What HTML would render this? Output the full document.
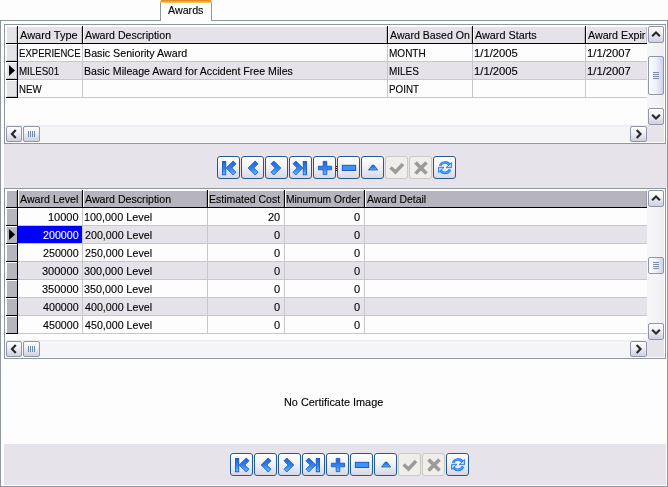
<!DOCTYPE html><html><head><meta charset="utf-8"><style>
*{margin:0;padding:0}
html,body{width:668px;height:487px;overflow:hidden;background:#fcfdfc;position:relative}
body>div,body>svg{position:absolute}
.t{position:absolute;font-family:"Liberation Sans",sans-serif;font-size:11px;line-height:18px;color:#000;white-space:nowrap;filter:grayscale(1);-webkit-text-stroke:0.12px currentColor}
.sb{position:absolute;border:1px solid #8e96a8;border-radius:2px;background:linear-gradient(180deg,#ffffff 0%,#eeeef5 45%,#cfd0e0 100%);overflow:hidden}
.sb.tv{background:linear-gradient(90deg,#fdfdff 0%,#eef0f8 50%,#cdd2ea 100%)}
.grip{position:absolute;left:4px;top:50%;margin-top:-4px;width:6px;height:7px;background:repeating-linear-gradient(180deg,#7e8aa6 0,#7e8aa6 1px,transparent 1px,transparent 2px)}
.gripv{position:absolute;left:4px;top:4px;width:7px;height:6px;background:repeating-linear-gradient(90deg,#6f8aa8 0,#6f8aa8 1px,transparent 1px,transparent 2px)}
.nb{position:absolute;width:21px;height:21px;border:1px solid #255a8e;border-radius:3px;background:linear-gradient(180deg,#ffffff 0%,#f4f4f8 40%,#d8d8e6 100%)}
.nb.dis{border-color:#cbc7c2;background:#f0eeea}
</style></head><body><div style="left:0px;top:20px;width:668px;height:467px;background:#fcfdfc;"></div><div style="left:0px;top:20px;width:1px;height:467px;background:#8f979c;"></div><div style="left:667px;top:20px;width:1px;height:467px;background:#8f979c;"></div><div style="left:0px;top:20px;width:668px;height:1px;background:#8f979c;"></div><div style="left:0px;top:486px;width:668px;height:1px;background:#8f979c;"></div><div style="left:160px;top:0px;width:52px;height:21px;background:#fcfdfc;"></div><div style="left:160px;top:3px;width:1px;height:18px;background:#8f979c;"></div><div style="left:211px;top:3px;width:1px;height:18px;background:#8f979c;"></div><div style="left:161px;top:0px;width:50px;height:1px;background:#e68a2e;"></div><div style="left:160px;top:1px;width:52px;height:1px;background:#f3a33a;"></div><div style="left:160px;top:2px;width:52px;height:1px;background:#fbc54a;"></div><div class="t" style="left:168.00px;top:1px;color:#000;transform:scaleX(0.9722);transform-origin:0 0;">Awards</div><div style="left:4px;top:144px;width:663px;height:44px;background:#e6e3ea;"></div><div style="left:4px;top:444px;width:662px;height:41px;background:#e6e3ea;"></div><div style="left:4px;top:24px;width:662px;height:120px;background:#8f979c;"></div><div style="left:5px;top:25px;width:660px;height:118px;background:#fcfdfc;"></div><div style="left:7px;top:27px;width:640px;height:16px;background:#e5e2e9;"></div><div style="left:6px;top:43px;width:641px;height:1px;background:#000;"></div><div style="left:17px;top:26px;width:1px;height:72px;background:#000;"></div><div style="left:16px;top:27px;width:1px;height:16px;background:rgba(0,0,0,0.14);"></div><div style="left:646px;top:27px;width:1px;height:16px;background:rgba(0,0,0,0.14);"></div><div style="left:18px;top:27px;width:1px;height:16px;background:#fff;"></div><div style="left:81px;top:27px;width:1px;height:16px;background:rgba(0,0,0,0.14);"></div><div style="left:19px;top:26px;width:63px;height:18px;overflow:hidden;"><div class="t" style="position:absolute;left:1.00px;top:0;color:#000;">Award Type</div></div><div style="left:82px;top:26px;width:1px;height:18px;background:#000;"></div><div style="left:83px;top:27px;width:1px;height:16px;background:#fff;"></div><div style="left:386px;top:27px;width:1px;height:16px;background:rgba(0,0,0,0.14);"></div><div style="left:84px;top:26px;width:303px;height:18px;overflow:hidden;"><div class="t" style="position:absolute;left:1.00px;top:0;color:#000;transform:scaleX(0.9663);transform-origin:0 0;">Award Description</div></div><div style="left:387px;top:26px;width:1px;height:18px;background:#000;"></div><div style="left:388px;top:27px;width:1px;height:16px;background:#fff;"></div><div style="left:471px;top:27px;width:1px;height:16px;background:rgba(0,0,0,0.14);"></div><div style="left:389px;top:26px;width:83px;height:18px;overflow:hidden;"><div class="t" style="position:absolute;left:1.00px;top:0;color:#000;transform:scaleX(0.9634);transform-origin:0 0;">Award Based On</div></div><div style="left:472px;top:26px;width:1px;height:18px;background:#000;"></div><div style="left:473px;top:27px;width:1px;height:16px;background:#fff;"></div><div style="left:584px;top:27px;width:1px;height:16px;background:rgba(0,0,0,0.14);"></div><div style="left:474px;top:26px;width:111px;height:18px;overflow:hidden;"><div class="t" style="position:absolute;left:1.00px;top:0;color:#000;transform:scaleX(0.9841);transform-origin:0 0;">Award Starts</div></div><div style="left:585px;top:26px;width:1px;height:18px;background:#000;"></div><div style="left:586px;top:27px;width:1px;height:16px;background:#fff;"></div><div style="left:587px;top:26px;width:59px;height:18px;overflow:hidden;"><div class="t" style="position:absolute;left:1.00px;top:0;color:#000;transform:scaleX(0.9700);transform-origin:0 0;">Award Expir</div></div><div style="left:18px;top:44px;width:629px;height:17px;background:#fcfdfc;"></div><div style="left:18px;top:61px;width:629px;height:1px;background:#c8c8cc;"></div><div style="left:7px;top:45px;width:10px;height:16px;background:#e5e2e9;"></div><div style="left:16px;top:45px;width:1px;height:16px;background:#c4c0cc;"></div><div style="left:7px;top:60px;width:10px;height:1px;background:#c4c0cc;"></div><div style="left:6px;top:61px;width:12px;height:1px;background:#000;"></div><div style="left:18px;top:44px;width:64px;height:18px;overflow:hidden;"><div class="t" style="position:absolute;left:1.13px;top:0;color:#000;transform:scaleX(0.8696);transform-origin:0 0;">EXPERIENCE</div></div><div style="left:82px;top:44px;width:1px;height:17px;background:#c8c8cc;"></div><div style="left:83px;top:44px;width:304px;height:18px;overflow:hidden;"><div class="t" style="position:absolute;left:1.03px;top:0;color:#000;transform:scaleX(0.9714);transform-origin:0 0;">Basic Seniority Award</div></div><div style="left:387px;top:44px;width:1px;height:17px;background:#c8c8cc;"></div><div style="left:388px;top:44px;width:84px;height:18px;overflow:hidden;"><div class="t" style="position:absolute;left:1.09px;top:0;color:#000;transform:scaleX(0.9103);transform-origin:0 0;">MONTH</div></div><div style="left:472px;top:44px;width:1px;height:17px;background:#c8c8cc;"></div><div style="left:473px;top:44px;width:112px;height:18px;overflow:hidden;"><div class="t" style="position:absolute;left:0.98px;top:0;color:#000;transform:scaleX(1.0238);transform-origin:0 0;">1/1/2005</div></div><div style="left:585px;top:44px;width:1px;height:17px;background:#c8c8cc;"></div><div style="left:586px;top:44px;width:61px;height:18px;overflow:hidden;"><div class="t" style="position:absolute;left:0.98px;top:0;color:#000;transform:scaleX(1.0238);transform-origin:0 0;">1/1/2007</div></div><div style="left:18px;top:62px;width:629px;height:17px;background:#e5e2e9;"></div><div style="left:18px;top:79px;width:629px;height:1px;background:#c8c8cc;"></div><div style="left:7px;top:63px;width:10px;height:16px;background:#e5e2e9;"></div><div style="left:16px;top:63px;width:1px;height:16px;background:#c4c0cc;"></div><div style="left:7px;top:78px;width:10px;height:1px;background:#c4c0cc;"></div><div style="left:6px;top:79px;width:12px;height:1px;background:#000;"></div><svg style="left:9px;top:65px" width="7" height="11"><path d="M0 0 L6 5.5 L0 11 Z" fill="#000"/></svg><div style="left:18px;top:62px;width:64px;height:18px;overflow:hidden;"><div class="t" style="position:absolute;left:1.11px;top:0;color:#000;transform:scaleX(0.8864);transform-origin:0 0;">MILES01</div></div><div style="left:82px;top:62px;width:1px;height:17px;background:#c8c8cc;"></div><div style="left:83px;top:62px;width:304px;height:18px;overflow:hidden;"><div class="t" style="position:absolute;left:1.04px;top:0;color:#000;transform:scaleX(0.9630);transform-origin:0 0;">Basic Mileage Award for Accident Free Miles</div></div><div style="left:387px;top:62px;width:1px;height:17px;background:#c8c8cc;"></div><div style="left:388px;top:62px;width:84px;height:18px;overflow:hidden;"><div class="t" style="position:absolute;left:1.09px;top:0;color:#000;transform:scaleX(0.9062);transform-origin:0 0;">MILES</div></div><div style="left:472px;top:62px;width:1px;height:17px;background:#c8c8cc;"></div><div style="left:473px;top:62px;width:112px;height:18px;overflow:hidden;"><div class="t" style="position:absolute;left:0.98px;top:0;color:#000;transform:scaleX(1.0238);transform-origin:0 0;">1/1/2005</div></div><div style="left:585px;top:62px;width:1px;height:17px;background:#c8c8cc;"></div><div style="left:586px;top:62px;width:61px;height:18px;overflow:hidden;"><div class="t" style="position:absolute;left:0.98px;top:0;color:#000;transform:scaleX(1.0238);transform-origin:0 0;">1/1/2007</div></div><div style="left:18px;top:80px;width:629px;height:17px;background:#fcfdfc;"></div><div style="left:18px;top:97px;width:629px;height:1px;background:#c8c8cc;"></div><div style="left:7px;top:81px;width:10px;height:16px;background:#e5e2e9;"></div><div style="left:16px;top:81px;width:1px;height:16px;background:#c4c0cc;"></div><div style="left:7px;top:96px;width:10px;height:1px;background:#c4c0cc;"></div><div style="left:6px;top:97px;width:12px;height:1px;background:#000;"></div><div style="left:18px;top:80px;width:64px;height:18px;overflow:hidden;"><div class="t" style="position:absolute;left:1.12px;top:0;color:#000;transform:scaleX(0.8800);transform-origin:0 0;">NEW</div></div><div style="left:82px;top:80px;width:1px;height:17px;background:#c8c8cc;"></div><div style="left:387px;top:80px;width:1px;height:17px;background:#c8c8cc;"></div><div style="left:388px;top:80px;width:84px;height:18px;overflow:hidden;"><div class="t" style="position:absolute;left:1.11px;top:0;color:#000;transform:scaleX(0.8939);transform-origin:0 0;">POINT</div></div><div style="left:472px;top:80px;width:1px;height:17px;background:#c8c8cc;"></div><div style="left:585px;top:80px;width:1px;height:17px;background:#c8c8cc;"></div><div style="left:647px;top:26px;width:17px;height:99px;background:#f5f5f7;background:linear-gradient(90deg,#f7f7f9,#f3f3f6 70%,#ececf2);"></div><div class="sb " style="left:648px;top:26px;width:14px;height:15px;"><svg width="14" height="15" style="position:absolute;left:0;top:0"><path d="M3.1 9.3 L7.0 5.5 L10.9 9.3" stroke="#2a2a2a" stroke-width="2.2" fill="none"/></svg></div><div class="sb tv" style="left:648px;top:56px;width:14px;height:37px;"><div class="grip"></div></div><div class="sb " style="left:648px;top:108px;width:14px;height:15px;"><svg width="14" height="15" style="position:absolute;left:0;top:0"><path d="M3.1 5.7 L7.0 9.5 L10.9 5.7" stroke="#2a2a2a" stroke-width="2.2" fill="none"/></svg></div><div style="left:6px;top:125px;width:641px;height:17px;background:#f5f5f7;background:linear-gradient(180deg,#ebebf4 0,#ebebf4 1px,#f6f6f9 2px,#f4f4f7 100%);"></div><div class="sb " style="left:6px;top:126px;width:14px;height:14px;"><svg width="14" height="14" style="position:absolute;left:0;top:0"><path d="M8.8 3.1 L5.0 7.0 L8.8 10.9" stroke="#2a2a2a" stroke-width="2.2" fill="none"/></svg></div><div class="sb " style="left:23px;top:126px;width:15px;height:14px;"><div class="gripv"></div></div><div class="sb " style="left:630px;top:126px;width:15px;height:14px;"><svg width="15" height="14" style="position:absolute;left:0;top:0"><path d="M5.7 3.1 L9.5 7.0 L5.7 10.9" stroke="#2a2a2a" stroke-width="2.2" fill="none"/></svg></div><div style="left:647px;top:125px;width:17px;height:17px;background:#e6e3ea;"></div><div style="left:4px;top:188px;width:662px;height:171px;background:#8f979c;"></div><div style="left:5px;top:189px;width:660px;height:169px;background:#fcfdfc;"></div><div style="left:7px;top:191px;width:640px;height:16px;background:#b6b4be;"></div><div style="left:6px;top:207px;width:641px;height:1px;background:#000;"></div><div style="left:17px;top:190px;width:1px;height:144px;background:#000;"></div><div style="left:16px;top:191px;width:1px;height:16px;background:rgba(0,0,0,0.14);"></div><div style="left:646px;top:191px;width:1px;height:16px;background:rgba(0,0,0,0.14);"></div><div style="left:18px;top:191px;width:1px;height:16px;background:#fff;"></div><div style="left:81px;top:191px;width:1px;height:16px;background:rgba(0,0,0,0.14);"></div><div style="left:19px;top:190px;width:63px;height:18px;overflow:hidden;"><div class="t" style="position:absolute;left:1.00px;top:0;color:#000;transform:scaleX(0.9667);transform-origin:0 0;">Award Level</div></div><div style="left:82px;top:190px;width:1px;height:18px;background:#000;"></div><div style="left:83px;top:191px;width:1px;height:16px;background:#fff;"></div><div style="left:206px;top:191px;width:1px;height:16px;background:rgba(0,0,0,0.14);"></div><div style="left:84px;top:190px;width:123px;height:18px;overflow:hidden;"><div class="t" style="position:absolute;left:1.00px;top:0;color:#000;transform:scaleX(0.9663);transform-origin:0 0;">Award Description</div></div><div style="left:207px;top:190px;width:1px;height:18px;background:#000;"></div><div style="left:208px;top:191px;width:1px;height:16px;background:#fff;"></div><div style="left:283px;top:191px;width:1px;height:16px;background:rgba(0,0,0,0.14);"></div><div style="left:209px;top:190px;width:75px;height:18px;overflow:hidden;"><div class="t" style="position:absolute;left:0.05px;top:0;color:#000;transform:scaleX(0.9527);transform-origin:0 0;">Estimated Cost</div></div><div style="left:284px;top:190px;width:1px;height:18px;background:#000;"></div><div style="left:285px;top:191px;width:1px;height:16px;background:#fff;"></div><div style="left:363px;top:191px;width:1px;height:16px;background:rgba(0,0,0,0.14);"></div><div style="left:286px;top:190px;width:78px;height:18px;overflow:hidden;"><div class="t" style="position:absolute;left:0.06px;top:0;color:#000;transform:scaleX(0.9359);transform-origin:0 0;">Minumum Order</div></div><div style="left:364px;top:190px;width:1px;height:18px;background:#000;"></div><div style="left:365px;top:191px;width:1px;height:16px;background:#fff;"></div><div style="left:366px;top:190px;width:280px;height:18px;overflow:hidden;"><div class="t" style="position:absolute;left:1.00px;top:0;color:#000;transform:scaleX(0.9516);transform-origin:0 0;">Award Detail</div></div><div style="left:18px;top:208px;width:629px;height:17px;background:#fcfdfc;"></div><div style="left:18px;top:225px;width:629px;height:1px;background:#c8c8cc;"></div><div style="left:7px;top:209px;width:10px;height:16px;background:#b6b4be;"></div><div style="left:6px;top:225px;width:12px;height:1px;background:#000;"></div><div class="t" style="left:48.00px;top:208px;color:#000;">10000</div><div style="left:82px;top:208px;width:1px;height:17px;background:#c8c8cc;"></div><div style="left:83px;top:208px;width:124px;height:18px;overflow:hidden;"><div class="t" style="position:absolute;left:1.01px;top:0;color:#000;transform:scaleX(0.9853);transform-origin:0 0;">100,000 Level</div></div><div style="left:207px;top:208px;width:1px;height:17px;background:#c8c8cc;"></div><div class="t" style="left:268.00px;top:208px;color:#000;">20</div><div style="left:284px;top:208px;width:1px;height:17px;background:#c8c8cc;"></div><div class="t" style="left:354.00px;top:208px;color:#000;">0</div><div style="left:364px;top:208px;width:1px;height:17px;background:#c8c8cc;"></div><div style="left:18px;top:226px;width:629px;height:17px;background:#e5e2e9;"></div><div style="left:18px;top:243px;width:629px;height:1px;background:#c8c8cc;"></div><div style="left:7px;top:227px;width:10px;height:16px;background:#b6b4be;"></div><div style="left:6px;top:243px;width:12px;height:1px;background:#000;"></div><svg style="left:9px;top:229px" width="7" height="11"><path d="M0 0 L6 5.5 L0 11 Z" fill="#000"/></svg><div style="left:18px;top:226px;width:64px;height:17px;background:#0000ff;"></div><div class="t" style="left:43.00px;top:226px;color:#fff;transform:scaleX(0.9722);transform-origin:0 0;">200000</div><div style="left:82px;top:226px;width:1px;height:17px;background:#c8c8cc;"></div><div style="left:83px;top:226px;width:124px;height:18px;overflow:hidden;"><div class="t" style="position:absolute;left:2.00px;top:0;color:#000;transform:scaleX(0.9710);transform-origin:0 0;">200,000 Level</div></div><div style="left:207px;top:226px;width:1px;height:17px;background:#c8c8cc;"></div><div class="t" style="left:274.00px;top:226px;color:#000;">0</div><div style="left:284px;top:226px;width:1px;height:17px;background:#c8c8cc;"></div><div class="t" style="left:354.00px;top:226px;color:#000;">0</div><div style="left:364px;top:226px;width:1px;height:17px;background:#c8c8cc;"></div><div style="left:18px;top:244px;width:629px;height:17px;background:#fcfdfc;"></div><div style="left:18px;top:261px;width:629px;height:1px;background:#c8c8cc;"></div><div style="left:7px;top:245px;width:10px;height:16px;background:#b6b4be;"></div><div style="left:6px;top:261px;width:12px;height:1px;background:#000;"></div><div class="t" style="left:43.00px;top:244px;color:#000;transform:scaleX(0.9722);transform-origin:0 0;">250000</div><div style="left:82px;top:244px;width:1px;height:17px;background:#c8c8cc;"></div><div style="left:83px;top:244px;width:124px;height:18px;overflow:hidden;"><div class="t" style="position:absolute;left:2.00px;top:0;color:#000;transform:scaleX(0.9710);transform-origin:0 0;">250,000 Level</div></div><div style="left:207px;top:244px;width:1px;height:17px;background:#c8c8cc;"></div><div class="t" style="left:274.00px;top:244px;color:#000;">0</div><div style="left:284px;top:244px;width:1px;height:17px;background:#c8c8cc;"></div><div class="t" style="left:354.00px;top:244px;color:#000;">0</div><div style="left:364px;top:244px;width:1px;height:17px;background:#c8c8cc;"></div><div style="left:18px;top:262px;width:629px;height:17px;background:#e5e2e9;"></div><div style="left:18px;top:279px;width:629px;height:1px;background:#c8c8cc;"></div><div style="left:7px;top:263px;width:10px;height:16px;background:#b6b4be;"></div><div style="left:6px;top:279px;width:12px;height:1px;background:#000;"></div><div class="t" style="left:42.00px;top:262px;color:#000;">300000</div><div style="left:82px;top:262px;width:1px;height:17px;background:#c8c8cc;"></div><div style="left:83px;top:262px;width:124px;height:18px;overflow:hidden;"><div class="t" style="position:absolute;left:1.01px;top:0;color:#000;transform:scaleX(0.9853);transform-origin:0 0;">300,000 Level</div></div><div style="left:207px;top:262px;width:1px;height:17px;background:#c8c8cc;"></div><div class="t" style="left:274.00px;top:262px;color:#000;">0</div><div style="left:284px;top:262px;width:1px;height:17px;background:#c8c8cc;"></div><div class="t" style="left:354.00px;top:262px;color:#000;">0</div><div style="left:364px;top:262px;width:1px;height:17px;background:#c8c8cc;"></div><div style="left:18px;top:280px;width:629px;height:17px;background:#fcfdfc;"></div><div style="left:18px;top:297px;width:629px;height:1px;background:#c8c8cc;"></div><div style="left:7px;top:281px;width:10px;height:16px;background:#b6b4be;"></div><div style="left:6px;top:297px;width:12px;height:1px;background:#000;"></div><div class="t" style="left:42.00px;top:280px;color:#000;">350000</div><div style="left:82px;top:280px;width:1px;height:17px;background:#c8c8cc;"></div><div style="left:83px;top:280px;width:124px;height:18px;overflow:hidden;"><div class="t" style="position:absolute;left:1.01px;top:0;color:#000;transform:scaleX(0.9853);transform-origin:0 0;">350,000 Level</div></div><div style="left:207px;top:280px;width:1px;height:17px;background:#c8c8cc;"></div><div class="t" style="left:274.00px;top:280px;color:#000;">0</div><div style="left:284px;top:280px;width:1px;height:17px;background:#c8c8cc;"></div><div class="t" style="left:354.00px;top:280px;color:#000;">0</div><div style="left:364px;top:280px;width:1px;height:17px;background:#c8c8cc;"></div><div style="left:18px;top:298px;width:629px;height:17px;background:#e5e2e9;"></div><div style="left:18px;top:315px;width:629px;height:1px;background:#c8c8cc;"></div><div style="left:7px;top:299px;width:10px;height:16px;background:#b6b4be;"></div><div style="left:6px;top:315px;width:12px;height:1px;background:#000;"></div><div class="t" style="left:43.00px;top:298px;color:#000;transform:scaleX(0.9722);transform-origin:0 0;">400000</div><div style="left:82px;top:298px;width:1px;height:17px;background:#c8c8cc;"></div><div style="left:83px;top:298px;width:124px;height:18px;overflow:hidden;"><div class="t" style="position:absolute;left:2.00px;top:0;color:#000;transform:scaleX(0.9710);transform-origin:0 0;">400,000 Level</div></div><div style="left:207px;top:298px;width:1px;height:17px;background:#c8c8cc;"></div><div class="t" style="left:274.00px;top:298px;color:#000;">0</div><div style="left:284px;top:298px;width:1px;height:17px;background:#c8c8cc;"></div><div class="t" style="left:354.00px;top:298px;color:#000;">0</div><div style="left:364px;top:298px;width:1px;height:17px;background:#c8c8cc;"></div><div style="left:18px;top:316px;width:629px;height:17px;background:#fcfdfc;"></div><div style="left:18px;top:333px;width:629px;height:1px;background:#c8c8cc;"></div><div style="left:7px;top:317px;width:10px;height:16px;background:#b6b4be;"></div><div style="left:6px;top:333px;width:12px;height:1px;background:#000;"></div><div class="t" style="left:43.00px;top:316px;color:#000;transform:scaleX(0.9722);transform-origin:0 0;">450000</div><div style="left:82px;top:316px;width:1px;height:17px;background:#c8c8cc;"></div><div style="left:83px;top:316px;width:124px;height:18px;overflow:hidden;"><div class="t" style="position:absolute;left:2.00px;top:0;color:#000;transform:scaleX(0.9710);transform-origin:0 0;">450,000 Level</div></div><div style="left:207px;top:316px;width:1px;height:17px;background:#c8c8cc;"></div><div class="t" style="left:274.00px;top:316px;color:#000;">0</div><div style="left:284px;top:316px;width:1px;height:17px;background:#c8c8cc;"></div><div class="t" style="left:354.00px;top:316px;color:#000;">0</div><div style="left:364px;top:316px;width:1px;height:17px;background:#c8c8cc;"></div><div style="left:647px;top:190px;width:17px;height:150px;background:#f5f5f7;background:linear-gradient(90deg,#f7f7f9,#f3f3f6 70%,#ececf2);"></div><div class="sb " style="left:648px;top:190px;width:14px;height:15px;"><svg width="14" height="15" style="position:absolute;left:0;top:0"><path d="M3.1 9.3 L7.0 5.5 L10.9 9.3" stroke="#2a2a2a" stroke-width="2.2" fill="none"/></svg></div><div class="sb tv" style="left:648px;top:257px;width:14px;height:15px;"><div class="grip"></div></div><div class="sb " style="left:648px;top:323px;width:14px;height:15px;"><svg width="14" height="15" style="position:absolute;left:0;top:0"><path d="M3.1 5.7 L7.0 9.5 L10.9 5.7" stroke="#2a2a2a" stroke-width="2.2" fill="none"/></svg></div><div style="left:6px;top:340px;width:641px;height:17px;background:#f5f5f7;background:linear-gradient(180deg,#ebebf4 0,#ebebf4 1px,#f6f6f9 2px,#f4f4f7 100%);"></div><div class="sb " style="left:6px;top:341px;width:14px;height:14px;"><svg width="14" height="14" style="position:absolute;left:0;top:0"><path d="M8.8 3.1 L5.0 7.0 L8.8 10.9" stroke="#2a2a2a" stroke-width="2.2" fill="none"/></svg></div><div class="sb " style="left:23px;top:341px;width:15px;height:14px;"><div class="gripv"></div></div><div class="sb " style="left:630px;top:341px;width:15px;height:14px;"><svg width="15" height="14" style="position:absolute;left:0;top:0"><path d="M5.7 3.1 L9.5 7.0 L5.7 10.9" stroke="#2a2a2a" stroke-width="2.2" fill="none"/></svg></div><div style="left:647px;top:340px;width:17px;height:17px;background:#e6e3ea;"></div><div class="t" style="left:284.01px;top:393px;color:#000;transform:scaleX(0.9899);transform-origin:0 0;">No Certificate Image</div><div class="nb" style="left:217px;top:156px;"><svg width="21" height="21" viewBox="0 0 21 21" style="position:absolute;left:0;top:0"><defs><linearGradient id="gfirst" x1="0" y1="0" x2="0" y2="1"><stop offset="0" stop-color="#1e62da"/><stop offset="0.55" stop-color="#2f86ee"/><stop offset="1" stop-color="#62bcff"/></linearGradient></defs><rect x="4.4" y="4.4" width="3.4" height="13.4" fill="url(#gfirst)" stroke="#1150c4" stroke-width="0.8" stroke-linejoin="miter"/><path d="M8.2 11 L15.2 4 L18 6.8 L13.8 11 L18 15.2 L15.2 18 Z" fill="url(#gfirst)" stroke="#1150c4" stroke-width="0.8" stroke-linejoin="miter"/></svg></div><div class="nb" style="left:241px;top:156px;"><svg width="21" height="21" viewBox="0 0 21 21" style="position:absolute;left:0;top:0"><defs><linearGradient id="gprev" x1="0" y1="0" x2="0" y2="1"><stop offset="0" stop-color="#1e62da"/><stop offset="0.55" stop-color="#2f86ee"/><stop offset="1" stop-color="#62bcff"/></linearGradient></defs><path d="M6.2 11 L13.2 4 L16 6.8 L11.8 11 L16 15.2 L13.2 18 Z" fill="url(#gprev)" stroke="#1150c4" stroke-width="0.8" stroke-linejoin="miter"/></svg></div><div class="nb" style="left:265px;top:156px;"><svg width="21" height="21" viewBox="0 0 21 21" style="position:absolute;left:0;top:0"><defs><linearGradient id="gnext" x1="0" y1="0" x2="0" y2="1"><stop offset="0" stop-color="#1e62da"/><stop offset="0.55" stop-color="#2f86ee"/><stop offset="1" stop-color="#62bcff"/></linearGradient></defs><path d="M14.8 11 L7.8 4 L5 6.8 L9.2 11 L5 15.2 L7.8 18 Z" fill="url(#gnext)" stroke="#1150c4" stroke-width="0.8" stroke-linejoin="miter"/></svg></div><div class="nb" style="left:289px;top:156px;"><svg width="21" height="21" viewBox="0 0 21 21" style="position:absolute;left:0;top:0"><defs><linearGradient id="glast" x1="0" y1="0" x2="0" y2="1"><stop offset="0" stop-color="#1e62da"/><stop offset="0.55" stop-color="#2f86ee"/><stop offset="1" stop-color="#62bcff"/></linearGradient></defs><rect x="13.2" y="4.4" width="3.4" height="13.4" fill="url(#glast)" stroke="#1150c4" stroke-width="0.8" stroke-linejoin="miter"/><path d="M12.8 11 L5.8 4 L3 6.8 L7.2 11 L3 15.2 L5.8 18 Z" fill="url(#glast)" stroke="#1150c4" stroke-width="0.8" stroke-linejoin="miter"/></svg></div><div class="nb" style="left:313px;top:156px;"><svg width="21" height="21" viewBox="0 0 21 21" style="position:absolute;left:0;top:0"><defs><linearGradient id="gplus" x1="0" y1="0" x2="0" y2="1"><stop offset="0" stop-color="#1e62da"/><stop offset="0.55" stop-color="#2f86ee"/><stop offset="1" stop-color="#62bcff"/></linearGradient></defs><path d="M9.2 4.4 H12.8 V9.2 H17.6 V12.8 H12.8 V17.6 H9.2 V12.8 H4.4 V9.2 H9.2 Z" fill="url(#gplus)" stroke="#1150c4" stroke-width="0.8" stroke-linejoin="miter"/></svg></div><div class="nb" style="left:337px;top:156px;"><svg width="21" height="21" viewBox="0 0 21 21" style="position:absolute;left:0;top:0"><defs><linearGradient id="gminus" x1="0" y1="0" x2="0" y2="1"><stop offset="0" stop-color="#1e62da"/><stop offset="0.55" stop-color="#2f86ee"/><stop offset="1" stop-color="#62bcff"/></linearGradient></defs><rect x="4.3" y="8.3" width="13.4" height="5.2" fill="#3d94f4" stroke="#1150c4" stroke-width="0.9"/></svg></div><div class="nb" style="left:361px;top:156px;"><svg width="21" height="21" viewBox="0 0 21 21" style="position:absolute;left:0;top:0"><defs><linearGradient id="gup" x1="0" y1="0" x2="0" y2="1"><stop offset="0" stop-color="#1e62da"/><stop offset="0.55" stop-color="#2f86ee"/><stop offset="1" stop-color="#62bcff"/></linearGradient></defs><path d="M6.5 13 L15.7 13 L11.9 8.1 L10.3 8.1 Z" fill="url(#gup)" stroke="#1150c4" stroke-width="0.8" stroke-linejoin="miter"/></svg></div><div class="nb dis" style="left:385px;top:156px;"><svg width="21" height="21" viewBox="0 0 21 21" style="position:absolute;left:0;top:0"><defs><linearGradient id="gcheck" x1="0" y1="0" x2="0" y2="1"><stop offset="0" stop-color="#1e62da"/><stop offset="0.55" stop-color="#2f86ee"/><stop offset="1" stop-color="#62bcff"/></linearGradient></defs><path d="M4.6 10.4 L9.5 15 L17 7" stroke="#9b9b9b" stroke-width="3.4" fill="none"/></svg></div><div class="nb dis" style="left:409px;top:156px;"><svg width="21" height="21" viewBox="0 0 21 21" style="position:absolute;left:0;top:0"><defs><linearGradient id="gx" x1="0" y1="0" x2="0" y2="1"><stop offset="0" stop-color="#1e62da"/><stop offset="0.55" stop-color="#2f86ee"/><stop offset="1" stop-color="#62bcff"/></linearGradient></defs><path d="M5.5 5.5 L16.5 16.5 M16.5 5.5 L5.5 16.5" stroke="#9b9b9b" stroke-width="3.6" fill="none"/></svg></div><div class="nb" style="left:433px;top:156px;"><svg width="21" height="21" viewBox="0 0 21 21" style="position:absolute;left:0;top:0"><defs><linearGradient id="grefresh" x1="0" y1="0" x2="0" y2="1"><stop offset="0" stop-color="#1e62da"/><stop offset="0.55" stop-color="#2f86ee"/><stop offset="1" stop-color="#62bcff"/></linearGradient></defs><path d="M6.1 8.9 A5.2 5.2 0 0 1 15.5 8.1" stroke="#2a80ec" stroke-width="2.7" fill="none"/><path d="M6.1 8.9 A5.2 5.2 0 0 1 15.5 8.1" stroke="#5fb0ff" stroke-width="0.8" fill="none"/><path d="M12 10.7 L17.6 10.7 L17.6 5.6 Z" fill="#a8dcff" stroke="#2a80ec" stroke-width="1"/><path d="M15.9 12.5 A5.2 5.2 0 0 1 6.5 13.3" stroke="#2a80ec" stroke-width="2.7" fill="none"/><path d="M15.9 12.5 A5.2 5.2 0 0 1 6.5 13.3" stroke="#5fb0ff" stroke-width="0.8" fill="none"/><path d="M10 10.3 L4.6 10.3 L4.6 15.6 Z" fill="#a8dcff" stroke="#2a80ec" stroke-width="1"/></svg></div><div style="left:336px;top:166px;width:1px;height:6px;background:repeating-linear-gradient(180deg,#000 0,#000 1px,transparent 1px,transparent 2px)"></div><div class="nb" style="left:230px;top:453px;"><svg width="21" height="21" viewBox="0 0 21 21" style="position:absolute;left:0;top:0"><defs><linearGradient id="gfirst" x1="0" y1="0" x2="0" y2="1"><stop offset="0" stop-color="#1e62da"/><stop offset="0.55" stop-color="#2f86ee"/><stop offset="1" stop-color="#62bcff"/></linearGradient></defs><rect x="4.4" y="4.4" width="3.4" height="13.4" fill="url(#gfirst)" stroke="#1150c4" stroke-width="0.8" stroke-linejoin="miter"/><path d="M8.2 11 L15.2 4 L18 6.8 L13.8 11 L18 15.2 L15.2 18 Z" fill="url(#gfirst)" stroke="#1150c4" stroke-width="0.8" stroke-linejoin="miter"/></svg></div><div class="nb" style="left:254px;top:453px;"><svg width="21" height="21" viewBox="0 0 21 21" style="position:absolute;left:0;top:0"><defs><linearGradient id="gprev" x1="0" y1="0" x2="0" y2="1"><stop offset="0" stop-color="#1e62da"/><stop offset="0.55" stop-color="#2f86ee"/><stop offset="1" stop-color="#62bcff"/></linearGradient></defs><path d="M6.2 11 L13.2 4 L16 6.8 L11.8 11 L16 15.2 L13.2 18 Z" fill="url(#gprev)" stroke="#1150c4" stroke-width="0.8" stroke-linejoin="miter"/></svg></div><div class="nb" style="left:278px;top:453px;"><svg width="21" height="21" viewBox="0 0 21 21" style="position:absolute;left:0;top:0"><defs><linearGradient id="gnext" x1="0" y1="0" x2="0" y2="1"><stop offset="0" stop-color="#1e62da"/><stop offset="0.55" stop-color="#2f86ee"/><stop offset="1" stop-color="#62bcff"/></linearGradient></defs><path d="M14.8 11 L7.8 4 L5 6.8 L9.2 11 L5 15.2 L7.8 18 Z" fill="url(#gnext)" stroke="#1150c4" stroke-width="0.8" stroke-linejoin="miter"/></svg></div><div class="nb" style="left:302px;top:453px;"><svg width="21" height="21" viewBox="0 0 21 21" style="position:absolute;left:0;top:0"><defs><linearGradient id="glast" x1="0" y1="0" x2="0" y2="1"><stop offset="0" stop-color="#1e62da"/><stop offset="0.55" stop-color="#2f86ee"/><stop offset="1" stop-color="#62bcff"/></linearGradient></defs><rect x="13.2" y="4.4" width="3.4" height="13.4" fill="url(#glast)" stroke="#1150c4" stroke-width="0.8" stroke-linejoin="miter"/><path d="M12.8 11 L5.8 4 L3 6.8 L7.2 11 L3 15.2 L5.8 18 Z" fill="url(#glast)" stroke="#1150c4" stroke-width="0.8" stroke-linejoin="miter"/></svg></div><div class="nb" style="left:326px;top:453px;"><svg width="21" height="21" viewBox="0 0 21 21" style="position:absolute;left:0;top:0"><defs><linearGradient id="gplus" x1="0" y1="0" x2="0" y2="1"><stop offset="0" stop-color="#1e62da"/><stop offset="0.55" stop-color="#2f86ee"/><stop offset="1" stop-color="#62bcff"/></linearGradient></defs><path d="M9.2 4.4 H12.8 V9.2 H17.6 V12.8 H12.8 V17.6 H9.2 V12.8 H4.4 V9.2 H9.2 Z" fill="url(#gplus)" stroke="#1150c4" stroke-width="0.8" stroke-linejoin="miter"/></svg></div><div class="nb" style="left:350px;top:453px;"><svg width="21" height="21" viewBox="0 0 21 21" style="position:absolute;left:0;top:0"><defs><linearGradient id="gminus" x1="0" y1="0" x2="0" y2="1"><stop offset="0" stop-color="#1e62da"/><stop offset="0.55" stop-color="#2f86ee"/><stop offset="1" stop-color="#62bcff"/></linearGradient></defs><rect x="4.3" y="8.3" width="13.4" height="5.2" fill="#3d94f4" stroke="#1150c4" stroke-width="0.9"/></svg></div><div class="nb" style="left:374px;top:453px;"><svg width="21" height="21" viewBox="0 0 21 21" style="position:absolute;left:0;top:0"><defs><linearGradient id="gup" x1="0" y1="0" x2="0" y2="1"><stop offset="0" stop-color="#1e62da"/><stop offset="0.55" stop-color="#2f86ee"/><stop offset="1" stop-color="#62bcff"/></linearGradient></defs><path d="M6.5 13 L15.7 13 L11.9 8.1 L10.3 8.1 Z" fill="url(#gup)" stroke="#1150c4" stroke-width="0.8" stroke-linejoin="miter"/></svg></div><div class="nb dis" style="left:398px;top:453px;"><svg width="21" height="21" viewBox="0 0 21 21" style="position:absolute;left:0;top:0"><defs><linearGradient id="gcheck" x1="0" y1="0" x2="0" y2="1"><stop offset="0" stop-color="#1e62da"/><stop offset="0.55" stop-color="#2f86ee"/><stop offset="1" stop-color="#62bcff"/></linearGradient></defs><path d="M4.6 10.4 L9.5 15 L17 7" stroke="#9b9b9b" stroke-width="3.4" fill="none"/></svg></div><div class="nb dis" style="left:422px;top:453px;"><svg width="21" height="21" viewBox="0 0 21 21" style="position:absolute;left:0;top:0"><defs><linearGradient id="gx" x1="0" y1="0" x2="0" y2="1"><stop offset="0" stop-color="#1e62da"/><stop offset="0.55" stop-color="#2f86ee"/><stop offset="1" stop-color="#62bcff"/></linearGradient></defs><path d="M5.5 5.5 L16.5 16.5 M16.5 5.5 L5.5 16.5" stroke="#9b9b9b" stroke-width="3.6" fill="none"/></svg></div><div class="nb" style="left:446px;top:453px;"><svg width="21" height="21" viewBox="0 0 21 21" style="position:absolute;left:0;top:0"><defs><linearGradient id="grefresh" x1="0" y1="0" x2="0" y2="1"><stop offset="0" stop-color="#1e62da"/><stop offset="0.55" stop-color="#2f86ee"/><stop offset="1" stop-color="#62bcff"/></linearGradient></defs><path d="M6.1 8.9 A5.2 5.2 0 0 1 15.5 8.1" stroke="#2a80ec" stroke-width="2.7" fill="none"/><path d="M6.1 8.9 A5.2 5.2 0 0 1 15.5 8.1" stroke="#5fb0ff" stroke-width="0.8" fill="none"/><path d="M12 10.7 L17.6 10.7 L17.6 5.6 Z" fill="#a8dcff" stroke="#2a80ec" stroke-width="1"/><path d="M15.9 12.5 A5.2 5.2 0 0 1 6.5 13.3" stroke="#2a80ec" stroke-width="2.7" fill="none"/><path d="M15.9 12.5 A5.2 5.2 0 0 1 6.5 13.3" stroke="#5fb0ff" stroke-width="0.8" fill="none"/><path d="M10 10.3 L4.6 10.3 L4.6 15.6 Z" fill="#a8dcff" stroke="#2a80ec" stroke-width="1"/></svg></div></body></html>
